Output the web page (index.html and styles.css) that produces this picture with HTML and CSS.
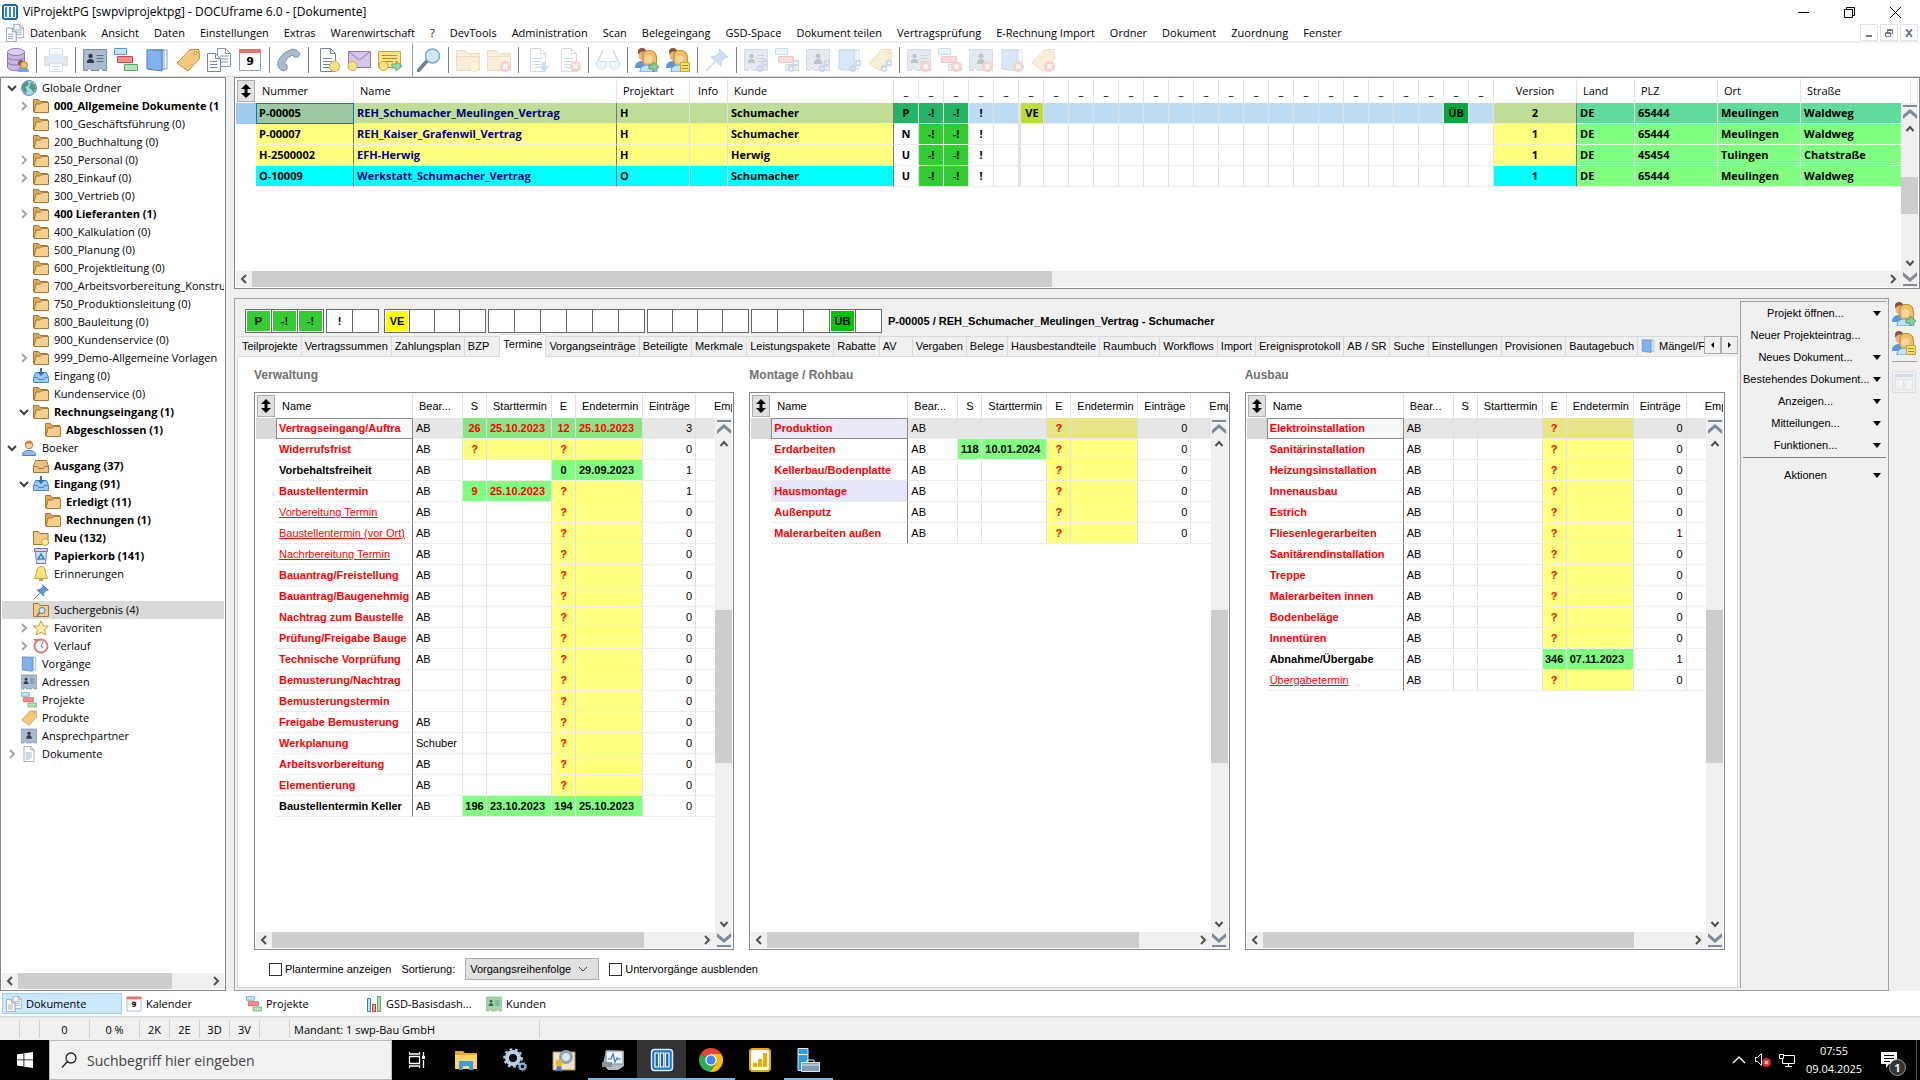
FILE: index.html
```html
<!DOCTYPE html>
<html lang="de">
<head>
<meta charset="utf-8">
<title>ViProjektPG [swpviprojektpg] - DOCUframe 6.0 - [Dokumente]</title>
<link rel="stylesheet" href="styles.css">
</head>
<body>
<svg class="sprite" aria-hidden="true">
  <symbol id="app" viewBox="0 0 16 16"><rect x=".5" y=".5" width="15" height="15" rx="2.500" fill="#1c6db5" stroke="#1c5f9e"/><path d="M2.500 2.500h3v11h-3zM6.500 2.500h3v11h-3zM10.500 2.500h3v11h-3z" fill="#2f86d0" stroke="#fff"/></symbol>
  <symbol id="book" viewBox="0 0 24 24"><path d="M17 2h5v19h-5z" fill="#fff" stroke="#7f9dbd"/><path d="M2 1.500l15 1V23L2 21z" fill="#7fb2ee" stroke="#4a7ec2"/><path d="M2 1.500h17v20" fill="none" stroke="#7f9dbd"/></symbol>
  <symbol id="card" viewBox="0 0 24 24"><path d="M.5 1.500h23v21h-4c-.5-3-3-3-3.500 0H8c-.5-3-3-3-3.500 0h-4z" fill="#a9bbce" stroke="#7b8fa6"/><circle cx="7.500" cy="8" r="2.200" fill="#2f3b49"/><path d="M4 15v-2l2-2h3l2 2v2z" fill="#2f3b49"/><path d="M13.500 7.500h7M13.500 10.500h7M13.500 13.500h7" stroke="#5b6d82"/></symbol>
  <symbol id="contact" viewBox="0 0 24 24"><path d="M.5 1.500h23v21h-4c-.5-3-3-3-3.500 0H8c-.5-3-3-3-3.500 0h-4z" fill="#a9bbce" stroke="#7b8fa6"/><circle cx="12" cy="8" r="2.500" fill="#2f3b49"/><path d="M8 16v-2l2-3h4l2 3v2z" fill="#2f3b49"/></symbol>
  <symbol id="cardg" viewBox="0 0 24 24"><path d="M.5 1.500h23v21h-4c-.5-3-3-3-3.500 0H8c-.5-3-3-3-3.500 0h-4z" fill="#a5d6a9" stroke="#7ab986"/><circle cx="7.500" cy="8" r="2.200" fill="#3d6b4b"/><path d="M4 15v-2l2-2h3l2 2v2z" fill="#3d6b4b"/><path d="M13.500 7.500h7M13.500 10.500h7M13.500 13.500h7" stroke="#4d8560"/></symbol>
  <symbol id="proj" viewBox="0 0 24 24"><path d="M.5.5h12v6H.5z" fill="#bfe3fa" stroke="#4f9bd6"/><path d="M3.500 8.500h15v6h-15z" fill="#f78c8c" stroke="#c94a4a"/><path d="M10.500 16.500h13v6h-13z" fill="#b3e2b8" stroke="#57a867"/></symbol>
  <symbol id="tag" viewBox="0 0 24 24"><path d="M14 1.500h9l.5 9L12 23 1 15z" fill="#f5c97c" stroke="#c08a3a" stroke-linejoin="round"/><circle cx="19.500" cy="5" r="1.500" fill="#fff" stroke="#c08a3a"/></symbol>
  <symbol id="docs" viewBox="0 0 24 24"><path d="M10.500.5h8l5 5v13h-13z" fill="#f6f8fb" stroke="#8797a8"/><path d="M18.500.5v5h5M13 8h8M13 11h8M13 14h8" fill="none" stroke="#8797a8"/><path d="M.5 5.500h8l5 5v13H.5z" fill="#fff" stroke="#71869c"/><path d="M8.500 5.500v5h5M3 13.500h7M3 16.500h7M3 19.500h7" fill="none" stroke="#71869c"/></symbol>
  <symbol id="doc" viewBox="0 0 24 24"><path d="M4.500.5h10l5 5v18h-15z" fill="#fff" stroke="#71869c"/><path d="M14.500.5v5h5M7 10.500h9M7 13.500h9M7 16.500h9M7 19.500h6" fill="none" stroke="#71869c"/></symbol>
  <symbol id="cal" viewBox="0 0 24 24"><path d="M1.500 1.500h21v21h-21z" fill="#fdfdfd" stroke="#87a5bd"/><path d="M1 1h22v4H1z" fill="#f26d6d"/><text x="12" y="17" text-anchor="middle" font-family="DejaVu Sans" font-weight="700" font-size="11">9</text></symbol>
  <symbol id="coin" viewBox="0 0 24 24"><circle cx="18.500" cy="18.500" r="5" fill="#ffe37f" stroke="#c6a33c"/></symbol>
  <symbol id="bad" viewBox="0 0 24 24"><circle cx="18.500" cy="18.500" r="5.500" fill="#ef6666"/><path d="M16.500 16.500l4 4m0-4l-4 4" stroke="#fff" stroke-width="2"/></symbol>
  <symbol id="link" viewBox="0 0 24 24"><g fill="none" stroke="#4f80bf" stroke-width="1.800"><circle cx="16" cy="20.500" r="2.500"/><circle cx="21" cy="15" r="2.500"/><path d="M17 19.500l3-3.500"/></g></symbol>
  <symbol id="db" viewBox="0 0 24 24"><path d="M2.500 4v15c0 5 17 5 17 0V4" fill="#c9b5e3" stroke="#9379b8"/><ellipse cx="11" cy="4" rx="8.500" ry="3.500" fill="#ddd0ef" stroke="#9379b8"/><path d="M2.500 9c0 4 17 4 17 0M2.500 14c0 4 17 4 17 0" fill="none" stroke="#9379b8"/><circle cx="16" cy="15" r="3" fill="#8a5a3c"/><path d="M13 24c0-4 1-5 3-5s8 0 8 5z" fill="#6fa8e8"/><circle cx="19" cy="17" r="3.500" fill="#f3c071" stroke="#b98430"/></symbol>
  <symbol id="print" viewBox="0 0 24 24"><path d="M5.500.5h13v8h-13z" fill="#fff" stroke="#8797a8"/><path d="M.5 8.500h23v9H.5z" fill="#aebccc" stroke="#8797a8"/><path d="M4 6h16v6H4z" fill="#8dc1f5"/><path d="M5.500 15.500h13v8h-13zM8 18.500h8M8 21h8" fill="#fff" stroke="#8797a8"/></symbol>
  <symbol id="phone" viewBox="0 0 24 24"><path d="M13 2c3-2 8 0 10 4l-2 3h-4l-1-2c-5 2-8 5-8 9l2 1v4l-3 2c-4-1-7-4-6-9C3 8 8 4 13 2z" fill="#a9bbce" stroke="#7b8fa6"/></symbol>
  <symbol id="mail" viewBox="0 0 24 24"><path d="M1.500 3.500h22v16h-22z" fill="#d6c6ea" stroke="#9379b8"/><path d="M2 4l10.500 8L23 4" fill="none" stroke="#9379b8"/><circle cx="5.500" cy="18" r="4.500" fill="#ffe37f" stroke="#c6a33c"/></symbol>
  <symbol id="note" viewBox="0 0 24 24"><path d="M.5 3.500h22v16H.5z" fill="#fbe287" stroke="#c6a33c"/><path d="M4 7.500h15M4 10.500h15M4 13.500h11" stroke="#b18c2c"/><circle cx="5.500" cy="18" r="4.500" fill="#ffe37f" stroke="#c6a33c"/><path d="M14 16h4v-3l6 5-6 5v-3h-4z" fill="#9fd6a6" stroke="#57a867"/></symbol>
  <symbol id="lens" viewBox="0 0 24 24"><path d="M10 13L1.500 22.500" stroke="#6f8296" stroke-width="3.500" stroke-linecap="round"/><circle cx="15.500" cy="8" r="7" fill="#cdeafd" stroke="#7ea6c8" stroke-width="1.500"/></symbol>
  <symbol id="fold" viewBox="0 0 24 24"><path d="M.5 22.500v-20h9l2 3h12v17z" fill="#f3c985" stroke="#c2924a"/><path d="M.5 8.500h23" stroke="#c2924a"/></symbol>
  <symbol id="down" viewBox="0 0 24 24"><path d="M16 14h4v4h3l-5 6-5-6h3z" fill="#5b96e0"/></symbol>
  <symbol id="glasses" viewBox="0 0 24 24"><path d="M2 13L7 2M22 13L17 2" fill="none" stroke="#5fae7f" stroke-width="1.500"/><path d="M.5 13.500h10v3c0 6-10 6-10 0zM13.500 13.500h10v3c0 6-10 6-10 0zM10 14h4" fill="#bfe3fa" stroke="#6aa5c9"/></symbol>
  <symbol id="people" viewBox="0 0 24 24"><path d="M0 20c0-5 3-7 7-7l5 7z" fill="#5b96e0"/><circle cx="7" cy="4" r="4" fill="#8a5238"/><circle cx="8" cy="8" r="4.500" fill="#e9b77c"/><path d="M8 6c1-5 12-5 13 1 1 5 1 9-1 13h-4L9 17c-2-3-1-8-1-11z" fill="#f0bf62" stroke="#b98430"/><circle cx="13.500" cy="11" r="4" fill="#fbd3a0"/><path d="M5 24c0-5 3-7 8-7s9 2 9 7z" fill="#bfe3fa" stroke="#5b96e0"/></symbol>
  <symbol id="go" viewBox="0 0 24 24"><path d="M14 17h4v-3l6 5-6 5v-3h-4z" fill="#8bd09a" stroke="#4f9f64"/></symbol>
  <symbol id="memo" viewBox="0 0 24 24"><path d="M14.500 14.500h9v9h-9z" fill="#fbdc62" stroke="#c6a33c"/><path d="M16 17.500h6M16 20.500h6" stroke="#b18c2c"/></symbol>
  <symbol id="pin" viewBox="0 0 24 24"><path d="M10 14L1 23" stroke="#6f8296" stroke-width="1.500"/><path d="M14 1l9 8-4 1-3 4v4L6 9l5-1 4-4z" fill="#5b96e0" stroke="#2f6fb5"/></symbol>
  <symbol id="win" viewBox="0 0 24 24"><path d="M.5 1.500h23v21H.5z" fill="#f3f6f9" stroke="#a9bbce"/><path d="M3 4h18v3H3z" fill="#8fb0d5"/><path d="M3.500 9.500h8v10h-8zM13.500 9.500h7v10h-7z" fill="#fff" stroke="#b7c3cf"/></symbol>
  <symbol id="folder" viewBox="0 0 16 16"><path d="M.5 13.500v-12h5l1.500 2h7.500v10z" fill="#dca85a" stroke="#a87733"/><path d="M1 14.500L3 6h4.500l1.500-1.500h6.500v10z" fill="#f6cf8d" stroke="#a87733"/></symbol>
  <symbol id="newf" viewBox="0 0 16 16"><path d="M.5 14.500v-13h5l1.500 2h8v11z" fill="#f3c985" stroke="#a87733"/><circle cx="12" cy="12" r="3.500" fill="#ffe99b" stroke="#c6a33c"/></symbol>
  <symbol id="searchf" viewBox="0 0 16 16"><path d="M.5 14.500v-13h5l1.500 2h8.500v11z" fill="#f3c985" stroke="#a87733"/><path d="M4 14l3-4" stroke="#55789b" stroke-width="1.500"/><circle cx="9" cy="8.500" r="3" fill="#cdeafd" stroke="#55789b"/></symbol>
  <symbol id="inbox" viewBox="0 0 16 16"><path d="M2.500 4.500h11l2 5v5H.5v-5z" fill="#9ccaf5" stroke="#4a86c8"/><path d="M.5 9.500h4l1 2h5l1-2h4" fill="none" stroke="#4a86c8"/><path d="M7 0h2v4h3L8 8 4 4h3z" fill="#2f6fb5"/></symbol>
  <symbol id="outbox" viewBox="0 0 16 16"><path d="M2.500 2.500h11l2 6v6H.5v-6z" fill="#ecc384" stroke="#a87733"/><path d="M.5 8.500h4l1 2h5l1-2h4" fill="none" stroke="#a87733"/></symbol>
  <symbol id="globe" viewBox="0 0 16 16"><circle cx="8" cy="8" r="7.500" fill="#a8d5f2" stroke="#5b8fb5"/><path d="M2 4l4-3 2 2-1 3-3 1 2 3-1 4-3-3-1-4zM10 2l4 3 1 4-3 4-1-3-3-2 1-3z" fill="#4e9c7c"/></symbol>
  <symbol id="user" viewBox="0 0 16 16"><path d="M1.500 15.500c0-4 3-5 6.500-5s6.500 1 6.500 5z" fill="#8fbdf0" stroke="#4a7ec2"/><circle cx="8" cy="5" r="3.700" fill="#fbd3a0" stroke="#b8793e"/><path d="M4 5c0-6 8-6 8 0-2-2-6-2-8 0z" fill="#c98345"/></symbol>
  <symbol id="trash" viewBox="0 0 16 16"><path d="M2.500 3.500h11l-1 12h-9z" fill="#cfe4f7" stroke="#8570b5"/><path d="M1.500.5h13v3h-13z" fill="#d8cbee" stroke="#8570b5"/><path d="M8 6l3 5H5z" fill="none" stroke="#3b82c4" stroke-width="1.500"/></symbol>
  <symbol id="bell" viewBox="0 0 16 16"><path d="M8 .5c4 0 4.500 4 4.500 7l2 5h-13l2-5c0-3 .5-7 4.500-7z" fill="#ffe37f" stroke="#c6a33c"/><path d="M6 13h4v2H6z" fill="#c6a33c"/></symbol>
  <symbol id="star" viewBox="0 0 16 16"><path d="M8 .8l2.200 5 5.300.4-4 3.500 1.200 5.300L8 12.200 3.300 15l1.200-5.300-4-3.500 5.300-.4z" fill="#fff0a8" stroke="#c6a33c"/></symbol>
  <symbol id="hist" viewBox="0 0 16 16"><circle cx="8" cy="8" r="6.500" fill="#f1f6fb" stroke="#e07a7a" stroke-width="2"/><path d="M10 4L8 8.500l2.500 1.500" fill="none" stroke="#6f8296"/><path d="M0 1l5 0-1 4z" fill="#e07a7a"/></symbol>
  <symbol id="bars" viewBox="0 0 16 16"><path d="M1.500 2.500h3v13h-3z" fill="#bfe3fa" stroke="#3b78b8"/><path d="M6.500 8.500h3v7h-3z" fill="#f7a0a0" stroke="#c33"/><path d="M11.500.5h3v15h-3z" fill="#b3e2b8" stroke="#57a867"/></symbol>
  <symbol id="cr" viewBox="0 0 10 10"><path d="M3 1l4 4-4 4" fill="none" stroke="#a6a6a6" stroke-width="2"/></symbol>
  <symbol id="cd" viewBox="0 0 10 10"><path d="M1 3l4 4 4-4" fill="none" stroke="#404040" stroke-width="2"/></symbol>
  <symbol id="sl" viewBox="0 0 10 10"><path d="M7 1L3 5l4 4" fill="none" stroke="#505050" stroke-width="2"/></symbol>
  <symbol id="sr" viewBox="0 0 10 10"><path d="M3 1l4 4-4 4" fill="none" stroke="#505050" stroke-width="2"/></symbol>
  <symbol id="su" viewBox="0 0 10 10"><path d="M1.500 7L5 3l3.500 4" fill="none" stroke="#505050" stroke-width="2"/></symbol>
  <symbol id="sd" viewBox="0 0 10 10"><path d="M1.500 3L5 7l3.500-4" fill="none" stroke="#505050" stroke-width="2"/></symbol>
  <symbol id="first" viewBox="0 0 14 14"><path d="M0 0h14v2H0zM7 4l7 6v4L7 8l-7 6v-4z" fill="#7c8a9c"/></symbol>
  <symbol id="last" viewBox="0 0 14 14"><path d="M0 12h14v2H0zM7 10l7-6V0L7 6 0 0v4z" fill="#7c8a9c"/></symbol>
  <symbol id="ud" viewBox="0 0 10 14"><path d="M5 0l5 5H6.500v4H10l-5 5-5-5h3.500V5H0z" fill="#000"/></symbol>
  <symbol id="tri" viewBox="0 0 8 5"><path d="M0 0h8L4 5z" fill="#000"/></symbol>
</svg>

<header class="titlebar"><svg class="s16"><use href="#app"/></svg><h1>ViProjektPG [swpviprojektpg] - DOCUframe 6.0 - [Dokumente]</h1>
  <div class="winbtns">
    <button aria-label="Minimieren"><svg viewBox="0 0 11 11"><path d="M0 5.500h11" stroke="#000"/></svg></button>
    <button aria-label="Verkleinern"><svg viewBox="0 0 11 11"><path d="M.5 2.500h8v8h-8zM2.500 2V.5h8v8H9" fill="none" stroke="#000"/></svg></button>
    <button aria-label="Schließen"><svg viewBox="0 0 11 11"><path d="M0 0l11 11M11 0L0 11" stroke="#000"/></svg></button>
  </div>
</header>
<nav class="menubar"><svg class="s18"><use href="#docs"/></svg>
  <button>Datenbank</button><button>Ansicht</button><button>Daten</button><button>Einstellungen</button><button>Extras</button><button>Warenwirtschaft</button><button>?</button><button>DevTools</button><button>Administration</button><button>Scan</button><button>Belegeingang</button><button>GSD-Space</button><button>Dokument teilen</button><button>Vertragsprüfung</button><button>E-Rechnung Import</button><button>Ordner</button><button>Dokument</button><button>Zuordnung</button><button>Fenster</button>
  <div class="mdi">
    <button aria-label="Fenster minimieren"><svg viewBox="0 0 8 8"><path d="M1 7h6" stroke="#6d7b8c" stroke-width="2"/></svg></button>
    <button aria-label="Fenster verkleinern"><svg viewBox="0 0 8 8"><path d="M.5 3.500h5v4h-5zM.5 4.500h5M2.500 3V.5h5v4H6M2 1.500h6" fill="none" stroke="#6d7b8c"/></svg></button>
    <button aria-label="Fenster schließen"><svg viewBox="0 0 8 8"><path d="M1 0l6 8M7 0L1 8" stroke="#6d7b8c" stroke-width="2"/></svg></button>
  </div>
</nav>
<div class="toolbar">
  <button aria-label="Datenbank"><svg><use href="#db"/></svg></button><i></i>
  <button aria-label="Drucken" disabled><svg><use href="#print"/></svg></button><i></i>
  <button aria-label="Adressen"><svg><use href="#card"/></svg></button>
  <button aria-label="Projekte"><svg><use href="#proj"/></svg></button>
  <button aria-label="Vorgänge"><svg><use href="#book"/></svg></button>
  <button aria-label="Produkte"><svg><use href="#tag"/></svg></button>
  <button aria-label="Dokumente"><svg><use href="#docs"/></svg></button>
  <button aria-label="Kalender"><svg><use href="#cal"/></svg></button><i></i>
  <button aria-label="Telefon"><svg><use href="#phone"/></svg></button><i></i>
  <button aria-label="Neues Dokument"><svg><use href="#doc"/><use href="#coin"/></svg></button>
  <button aria-label="Neue E-Mail"><svg><use href="#mail"/></svg></button>
  <button aria-label="Neue Mitteilung"><svg><use href="#note"/></svg></button><i class="tall"></i>
  <button aria-label="Suchen"><svg><use href="#lens"/></svg></button><i></i>
  <button aria-label="Neuer Ordner" disabled><svg><use href="#fold"/><use href="#coin"/></svg></button>
  <button aria-label="Ordner löschen" disabled><svg><use href="#fold"/><use href="#bad"/></svg></button><i></i>
  <button aria-label="Ablegen" disabled><svg><use href="#doc"/><use href="#down"/></svg></button>
  <button aria-label="Löschen" disabled><svg><use href="#doc"/><use href="#bad"/></svg></button><i></i>
  <button aria-label="Ansehen" disabled><svg><use href="#glasses"/></svg></button><i></i>
  <button aria-label="Weiterleiten"><svg><use href="#people"/><use href="#go"/></svg></button>
  <button aria-label="Notiz senden"><svg><use href="#people"/><use href="#memo"/></svg></button><i></i>
  <button aria-label="Anheften" disabled><svg><use href="#pin"/></svg></button><i></i>
  <button aria-label="Adresse zuordnen" disabled><svg><use href="#card"/><use href="#link"/></svg></button>
  <button aria-label="Projekt zuordnen" disabled><svg><use href="#proj"/><use href="#link"/></svg></button>
  <button aria-label="Ansprechpartner zuordnen" disabled><svg><use href="#contact"/><use href="#link"/></svg></button>
  <button aria-label="Vorgang zuordnen" disabled><svg><use href="#book"/><use href="#link"/></svg></button>
  <button aria-label="Produkt zuordnen" disabled><svg><use href="#tag"/><use href="#link"/></svg></button><i></i>
  <button aria-label="Adresse lösen" disabled><svg><use href="#card"/><use href="#bad"/></svg></button>
  <button aria-label="Projekt lösen" disabled><svg><use href="#proj"/><use href="#bad"/></svg></button>
  <button aria-label="Ansprechpartner lösen" disabled><svg><use href="#contact"/><use href="#bad"/></svg></button>
  <button aria-label="Vorgang lösen" disabled><svg><use href="#book"/><use href="#bad"/></svg></button>
  <button aria-label="Produkt lösen" disabled><svg><use href="#tag"/><use href="#bad"/></svg></button>
</div>

<main class="work">
  <aside class="treepane">
    <ul class="tree">
      <li><b><svg><use href="#cd"/></svg></b><svg><use href="#globe"/></svg><span>Globale Ordner</span>
      <li class="l1 bold"><b><svg><use href="#cr"/></svg></b><svg><use href="#folder"/></svg><span>000_Allgemeine Dokumente (1</span>
      <li class="l1"><b></b><svg><use href="#folder"/></svg><span>100_Geschäftsführung (0)</span>
      <li class="l1"><b></b><svg><use href="#folder"/></svg><span>200_Buchhaltung (0)</span>
      <li class="l1"><b><svg><use href="#cr"/></svg></b><svg><use href="#folder"/></svg><span>250_Personal (0)</span>
      <li class="l1"><b><svg><use href="#cr"/></svg></b><svg><use href="#folder"/></svg><span>280_Einkauf (0)</span>
      <li class="l1"><b></b><svg><use href="#folder"/></svg><span>300_Vertrieb (0)</span>
      <li class="l1 bold"><b><svg><use href="#cr"/></svg></b><svg><use href="#folder"/></svg><span>400 Lieferanten (1)</span>
      <li class="l1"><b></b><svg><use href="#folder"/></svg><span>400_Kalkulation (0)</span>
      <li class="l1"><b></b><svg><use href="#folder"/></svg><span>500_Planung (0)</span>
      <li class="l1"><b></b><svg><use href="#folder"/></svg><span>600_Projektleitung (0)</span>
      <li class="l1"><b></b><svg><use href="#folder"/></svg><span>700_Arbeitsvorbereitung_Konstru</span>
      <li class="l1"><b></b><svg><use href="#folder"/></svg><span>750_Produktionsleitung (0)</span>
      <li class="l1"><b></b><svg><use href="#folder"/></svg><span>800_Bauleitung (0)</span>
      <li class="l1"><b></b><svg><use href="#folder"/></svg><span>900_Kundenservice (0)</span>
      <li class="l1"><b><svg><use href="#cr"/></svg></b><svg><use href="#folder"/></svg><span>999_Demo-Allgemeine Vorlagen</span>
      <li class="l1"><b></b><svg><use href="#inbox"/></svg><span>Eingang (0)</span>
      <li class="l1"><b></b><svg><use href="#folder"/></svg><span>Kundenservice (0)</span>
      <li class="l1 bold"><b><svg><use href="#cd"/></svg></b><svg><use href="#folder"/></svg><span>Rechnungseingang (1)</span>
      <li class="l2 bold"><b></b><svg><use href="#folder"/></svg><span>Abgeschlossen (1)</span>
      <li><b><svg><use href="#cd"/></svg></b><svg><use href="#user"/></svg><span>Boeker</span>
      <li class="l1 bold"><b></b><svg><use href="#outbox"/></svg><span>Ausgang (37)</span>
      <li class="l1 bold"><b><svg><use href="#cd"/></svg></b><svg><use href="#inbox"/></svg><span>Eingang (91)</span>
      <li class="l2 bold"><b></b><svg><use href="#folder"/></svg><span>Erledigt (11)</span>
      <li class="l2 bold"><b></b><svg><use href="#folder"/></svg><span>Rechnungen (1)</span>
      <li class="l1 bold"><b></b><svg><use href="#newf"/></svg><span>Neu (132)</span>
      <li class="l1 bold"><b></b><svg><use href="#trash"/></svg><span>Papierkorb (141)</span>
      <li class="l1"><b></b><svg><use href="#bell"/></svg><span>Erinnerungen</span>
      <li class="l1"><b></b><svg><use href="#pin"/></svg>
      <li class="l1 sel"><b></b><svg><use href="#searchf"/></svg><span>Suchergebnis (4)</span>
      <li class="l1"><b><svg><use href="#cr"/></svg></b><svg><use href="#star"/></svg><span>Favoriten</span>
      <li class="l1"><b><svg><use href="#cr"/></svg></b><svg><use href="#hist"/></svg><span>Verlauf</span>
      <li><b></b><svg><use href="#book"/></svg><span>Vorgänge</span>
      <li><b></b><svg><use href="#card"/></svg><span>Adressen</span>
      <li><b></b><svg><use href="#proj"/></svg><span>Projekte</span>
      <li><b></b><svg><use href="#tag"/></svg><span>Produkte</span>
      <li><b></b><svg><use href="#contact"/></svg><span>Ansprechpartner</span>
      <li><b><svg><use href="#cr"/></svg></b><svg><use href="#doc"/></svg><span>Dokumente</span>
    </ul>
    <div class="hs"><svg><use href="#sl"/></svg><div class="track"><div class="thumb" style="width:81%"></div></div><svg><use href="#sr"/></svg></div>
  </aside>

  <div class="right">
    <section class="grid top">
      <table class="list">
        <colgroup><col class="c-h"><col class="c-nr"><col class="c-nm"><col class="c-pa"><col class="c-in"><col class="c-ku"><col span="24" class="c-s"><col class="c-83"><col class="c-58"><col span="2" class="c-83"><col class="c-str"><col></colgroup>
        <thead><tr><th><button class="handle" aria-label="Sortieren"><svg><use href="#ud"/></svg></button><th>Nummer<th>Name<th>Projektart<th>Info<th>Kunde<th>_<th>_<th>_<th>_<th>_<th>_<th>_<th>_<th>_<th>_<th>_<th>_<th>_<th>_<th>_<th>_<th>_<th>_<th>_<th>_<th>_<th>_<th>_<th>_<th>Version<th>Land<th>PLZ<th>Ort<th>Straße<th></thead>
        <tbody>
          <tr class="cur"><td><td>P-00005<td>REH_Schumacher_Meulingen_Vertrag<td>H<td><td>Schumacher<td class="g">P<td class="g">-!<td class="g">-!<td>!<td><td class="ve">VE<td><td><td><td><td><td><td><td><td><td><td><td><td><td><td><td><td class="ub">ÜB<td><td>2<td>DE<td>65444<td>Meulingen<td>Waldweg<td>
          <tr class="yel"><td><td>P-00007<td>REH_Kaiser_Grafenwil_Vertrag<td>H<td><td>Schumacher<td>N<td class="g">-!<td class="g">-!<td>!<td><td><td><td><td><td><td><td><td><td><td><td><td><td><td><td><td><td><td><td><td>1<td>DE<td>65444<td>Meulingen<td>Waldweg<td>
          <tr class="yel"><td><td>H-2500002<td>EFH-Herwig<td>H<td><td>Herwig<td>U<td class="g">-!<td class="g">-!<td>!<td><td><td><td><td><td><td><td><td><td><td><td><td><td><td><td><td><td><td><td><td>1<td>DE<td>45454<td>Tulingen<td>Chatstraße<td>
          <tr class="cya"><td><td>O-10009<td>Werkstatt_Schumacher_Vertrag<td>O<td><td>Schumacher<td>U<td class="g">-!<td class="g">-!<td>!<td><td><td><td><td><td><td><td><td><td><td><td><td><td><td><td><td><td><td><td><td>1<td>DE<td>65444<td>Meulingen<td>Waldweg<td>
        </tbody>
      </table>
      <div class="vs"><svg class="s14"><use href="#first"/></svg><svg><use href="#su"/></svg><div class="vtrack"><div class="vthumb" style="height:31%;top:34%"></div></div><svg><use href="#sd"/></svg></div>
      <div class="hs"><svg><use href="#sl"/></svg><div class="track"><div class="thumb" style="width:49%"></div></div><svg><use href="#sr"/></svg></div>
      <div class="corner"><svg class="s14"><use href="#last"/></svg></div>
    </section>

    <div class="lower">
      <section class="project">
        <div class="detail">
          <div class="phase">
            <div class="grp"><span class="on">P</span><span class="on">-!</span><span class="on">-!</span></div>
            <div class="grp"><span>!</span><span></span></div>
            <div class="grp four wide"><span class="y">VE</span><span></span><span></span><span></span></div>
            <div class="grp"><span></span><span></span><span></span><span></span><span></span><span></span></div>
            <div class="grp four"><span></span><span></span><span></span><span></span></div>
            <div class="grp"><span></span><span></span><span></span><span class="on u">ÜB</span><span></span></div>
            <h2>P-00005 / REH_Schumacher_Meulingen_Vertrag - Schumacher</h2>
          </div>
          <div class="tabs">
            <div class="tabstrip"><button>Teilprojekte</button><button>Vertragssummen</button><button>Zahlungsplan</button><button class="pad">BZP</button><button class="act">Termine</button><button>Vorgangseinträge</button><button>Beteiligte</button><button>Merkmale</button><button>Leistungspakete</button><button>Rabatte</button><button class="pad more">AV</button><button>Vergaben</button><button>Belege</button><button>Hausbestandteile</button><button>Raumbuch</button><button>Workflows</button><button>Import</button><button>Ereignisprotokoll</button><button>AB / SR</button><button>Suche</button><button>Einstellungen</button><button>Provisionen</button><button>Bautagebuch</button><button class="ic"><svg class="s14"><use href="#book"/></svg>Mängel/F</button></div>
            <button class="sp" aria-label="Zurück"><svg viewBox="0 0 5 8"><path d="M4 1v6L1 4z"/></svg></button><button class="sp" aria-label="Weiter"><svg viewBox="0 0 5 8"><path d="M1 1v6l3-3z"/></svg></button>
          </div>
          <div class="page">
            <div class="three">
              <section><h3>Verwaltung</h3>
                <div class="grid">
                  <table class="dates">
                    <colgroup><col class="c-h"><col class="d-n"><col class="d-b"><col class="d-s"><col class="d-d"><col class="d-s"><col class="d-e"><col class="d-i"><col></colgroup>
                    <thead><tr><th><button class="handle" aria-label="Sortieren"><svg><use href="#ud"/></svg></button><th>Name<th>Bear...<th>S<th>Starttermin<th>E<th>Endetermin<th>Einträge<th class="cut">Emp</thead>
                    <tbody>
                      <tr class="first"><td><td>Vertragseingang/Auftra<td>AB<td class="g">26<td class="g">25.10.2023<td class="g">12<td class="g">25.10.2023<td>3<td>
                      <tr><td><td>Widerrufsfrist<td>AB<td class="y">?<td class="y"><td class="y">?<td class="y"><td>0<td>
                      <tr class="blk"><td><td>Vorbehaltsfreiheit<td>AB<td><td><td class="g">0<td class="g">29.09.2023<td>1<td>
                      <tr><td><td>Baustellentermin<td>AB<td class="g">9<td class="g">25.10.2023<td class="y">?<td class="y"><td>1<td>
                      <tr><td><td><a href="#">Vorbereitung Termin</a><td>AB<td><td><td class="y">?<td class="y"><td>0<td>
                      <tr><td><td><a href="#">Baustellentermin (vor Ort)</a><td>AB<td><td><td class="y">?<td class="y"><td>0<td>
                      <tr><td><td><a href="#">Nachrbereitung Termin</a><td>AB<td><td><td class="y">?<td class="y"><td>0<td>
                      <tr><td><td>Bauantrag/Freistellung<td>AB<td><td><td class="y">?<td class="y"><td>0<td>
                      <tr><td><td>Bauantrag/Baugenehmig<td>AB<td><td><td class="y">?<td class="y"><td>0<td>
                      <tr><td><td>Nachtrag zum Baustelle<td>AB<td><td><td class="y">?<td class="y"><td>0<td>
                      <tr><td><td>Prüfung/Freigabe Bauge<td>AB<td><td><td class="y">?<td class="y"><td>0<td>
                      <tr><td><td>Technische Vorprüfung<td>AB<td><td><td class="y">?<td class="y"><td>0<td>
                      <tr><td><td>Bemusterung/Nachtrag<td><td><td><td class="y">?<td class="y"><td>0<td>
                      <tr><td><td>Bemusterungstermin<td><td><td><td class="y">?<td class="y"><td>0<td>
                      <tr><td><td>Freigabe Bemusterung<td>AB<td><td><td class="y">?<td class="y"><td>0<td>
                      <tr><td><td>Werkplanung<td>Schuber<td><td><td class="y">?<td class="y"><td>0<td>
                      <tr><td><td>Arbeitsvorbereitung<td>AB<td><td><td class="y">?<td class="y"><td>0<td>
                      <tr><td><td>Elementierung<td>AB<td><td><td class="y">?<td class="y"><td>0<td>
                      <tr class="blk"><td><td>Baustellentermin Keller<td>AB<td class="g">196<td class="g">23.10.2023<td class="g">194<td class="g">25.10.2023<td>0<td>
                    </tbody>
                  </table>
                  <div class="vs"><svg class="s14"><use href="#first"/></svg><svg><use href="#su"/></svg><div class="vtrack"><div class="vthumb" style="height:33%;top:34%"></div></div><svg><use href="#sd"/></svg></div>
                  <div class="hs"><svg><use href="#sl"/></svg><div class="track"><div class="thumb" style="width:87%"></div></div><svg><use href="#sr"/></svg></div>
                  <div class="corner"><svg class="s14"><use href="#last"/></svg></div>
                </div>
              </section>
              <section><h3>Montage / Rohbau</h3>
                <div class="grid">
                  <table class="dates">
                    <colgroup><col class="c-h"><col class="d-n"><col class="d-b"><col class="d-s"><col class="d-d"><col class="d-s"><col class="d-e"><col class="d-i"><col></colgroup>
                    <thead><tr><th><button class="handle" aria-label="Sortieren"><svg><use href="#ud"/></svg></button><th>Name<th>Bear...<th>S<th>Starttermin<th>E<th>Endetermin<th>Einträge<th class="cut">Emp</thead>
                    <tbody>
                      <tr class="first"><td><td class="lav">Produktion<td>AB<td><td><td class="y">?<td class="y"><td>0<td>
                      <tr><td><td>Erdarbeiten<td>AB<td class="g k">118<td class="g k">10.01.2024<td class="y">?<td class="y"><td>0<td>
                      <tr><td><td>Kellerbau/Bodenplatte<td>AB<td><td><td class="y">?<td class="y"><td>0<td>
                      <tr><td><td class="lav">Hausmontage<td>AB<td><td><td class="y">?<td class="y"><td>0<td>
                      <tr><td><td>Außenputz<td>AB<td><td><td class="y">?<td class="y"><td>0<td>
                      <tr><td><td>Malerarbeiten außen<td>AB<td><td><td class="y">?<td class="y"><td>0<td>
                    </tbody>
                  </table>
                  <div class="vs"><svg class="s14"><use href="#first"/></svg><svg><use href="#su"/></svg><div class="vtrack"><div class="vthumb" style="height:33%;top:34%"></div></div><svg><use href="#sd"/></svg></div>
                  <div class="hs"><svg><use href="#sl"/></svg><div class="track"><div class="thumb" style="width:87%"></div></div><svg><use href="#sr"/></svg></div>
                  <div class="corner"><svg class="s14"><use href="#last"/></svg></div>
                </div>
              </section>
              <section><h3>Ausbau</h3>
                <div class="grid">
                  <table class="dates">
                    <colgroup><col class="c-h"><col class="d-n"><col class="d-b"><col class="d-s"><col class="d-d"><col class="d-s"><col class="d-e"><col class="d-i"><col></colgroup>
                    <thead><tr><th><button class="handle" aria-label="Sortieren"><svg><use href="#ud"/></svg></button><th>Name<th>Bear...<th>S<th>Starttermin<th>E<th>Endetermin<th>Einträge<th class="cut">Emp</thead>
                    <tbody>
                      <tr class="first"><td><td>Elektroinstallation<td>AB<td><td><td class="y">?<td class="y"><td>0<td>
                      <tr><td><td>Sanitärinstallation<td>AB<td><td><td class="y">?<td class="y"><td>0<td>
                      <tr><td><td>Heizungsinstallation<td>AB<td><td><td class="y">?<td class="y"><td>0<td>
                      <tr><td><td>Innenausbau<td>AB<td><td><td class="y">?<td class="y"><td>0<td>
                      <tr><td><td>Estrich<td>AB<td><td><td class="y">?<td class="y"><td>0<td>
                      <tr><td><td>Fliesenlegerarbeiten<td>AB<td><td><td class="y">?<td class="y"><td>1<td>
                      <tr><td><td>Sanitärendinstallation<td>AB<td><td><td class="y">?<td class="y"><td>0<td>
                      <tr><td><td>Treppe<td>AB<td><td><td class="y">?<td class="y"><td>0<td>
                      <tr><td><td>Malerarbeiten innen<td>AB<td><td><td class="y">?<td class="y"><td>0<td>
                      <tr><td><td>Bodenbeläge<td>AB<td><td><td class="y">?<td class="y"><td>0<td>
                      <tr><td><td>Innentüren<td>AB<td><td><td class="y">?<td class="y"><td>0<td>
                      <tr class="blk"><td><td>Abnahme/Übergabe<td>AB<td><td><td class="g">346<td class="g">07.11.2023<td>1<td>
                      <tr><td><td><a href="#">Übergabetermin</a><td>AB<td><td><td class="y">?<td class="y"><td>0<td>
                    </tbody>
                  </table>
                  <div class="vs"><svg class="s14"><use href="#first"/></svg><svg><use href="#su"/></svg><div class="vtrack"><div class="vthumb" style="height:33%;top:34%"></div></div><svg><use href="#sd"/></svg></div>
                  <div class="hs"><svg><use href="#sl"/></svg><div class="track"><div class="thumb" style="width:87%"></div></div><svg><use href="#sr"/></svg></div>
                  <div class="corner"><svg class="s14"><use href="#last"/></svg></div>
                </div>
              </section>
            </div>
            <div class="opts">
              <label><input type="checkbox">Plantermine anzeigen</label>
              <label class="sort">Sortierung:<span class="combo"><select><option>Vorgangsreihenfolge</option></select><svg viewBox="0 0 10 10"><path d="M1 3l4 4 4-4" fill="none" stroke="#404040"/></svg></span></label>
              <label><input type="checkbox">Untervorgänge ausblenden</label>
            </div>
          </div>
        </div>
        <aside class="actions">
          <button><span>Projekt öffnen...</span><svg><use href="#tri"/></svg></button>
          <button><span>Neuer Projekteintrag...</span></button>
          <button><span>Neues Dokument...</span><svg><use href="#tri"/></svg></button>
          <button><span>Bestehendes Dokument...</span><svg><use href="#tri"/></svg></button>
          <button><span>Anzeigen...</span><svg><use href="#tri"/></svg></button>
          <button><span>Mitteilungen...</span><svg><use href="#tri"/></svg></button>
          <button><span>Funktionen...</span><svg><use href="#tri"/></svg></button>
          <hr>
          <button><span>Aktionen</span><svg><use href="#tri"/></svg></button>
        </aside>
      </section>
      <aside class="side">
        <button aria-label="Weiterleiten"><svg><use href="#people"/><use href="#go"/></svg></button>
        <button aria-label="Notiz senden"><svg><use href="#people"/><use href="#memo"/></svg></button>
        <hr>
        <button aria-label="Layout" disabled><svg><use href="#win"/></svg></button>
      </aside>
    </div>
  </div>
</main>

<nav class="views">
  <button class="act"><svg><use href="#docs"/></svg>Dokumente</button>
  <button><svg><use href="#cal"/></svg>Kalender</button>
  <button><svg><use href="#proj"/></svg>Projekte</button>
  <button><svg><use href="#bars"/></svg>GSD-Basisdash...</button>
  <button><svg><use href="#cardg"/></svg>Kunden</button>
</nav>
<footer class="status"><span class="w20"></span><span class="w20"></span><span class="w50">0</span><span class="w50">0 %</span><span class="w30">2K</span><span class="w30">2E</span><span class="w30">3D</span><span class="w30">3V</span><span class="w30"></span><span class="client">Mandant: 1 swp-Bau GmbH</span></footer>

<div class="taskbar">
  <button class="start" aria-label="Start"><svg viewBox="0 0 16 16"><path d="M0 2.300l6.500-.9v6.100H0zM7.300 1.300L16 0v7.500H7.300zM0 8.300h6.500v6.200L0 13.600zM7.300 8.300H16V16l-8.700-1.300z" fill="#fff"/></svg></button>
  <label class="find"><svg viewBox="0 0 16 16"><path d="M6.500 9.500L1 15.500" stroke="#222" stroke-width="1.300"/><circle cx="10" cy="6" r="5" fill="none" stroke="#222" stroke-width="1.300"/></svg><input type="text" placeholder="Suchbegriff hier eingeben" aria-label="Suchbegriff"></label>
  <button aria-label="Aufgabenansicht"><svg viewBox="0 0 24 24"><path d="M4.500 8.500h10v7h-10zM4.500 4v2h10V4M4.500 20v-2h10v2M18.500 4v4M18.500 12v8" fill="none" stroke="#fff" stroke-width="1.300"/><path d="M17 8h3v3h-3z" fill="#fff"/></svg></button>
  <button aria-label="Explorer"><svg viewBox="0 0 24 24"><path d="M1 3h8l2 2h12v16H1z" fill="#e5a93a"/><path d="M1 7h22v14H1z" fill="#fcd462"/><path d="M5 13h14v9h-4v-4H9v4H5z" fill="#3d9be0"/></svg></button>
  <button aria-label="Dienste"><svg viewBox="0 0 24 24"><circle cx="10" cy="10" r="6" fill="none" stroke="#b9d3e6" stroke-width="4"/><circle cx="10" cy="10" r="8.800" fill="none" stroke="#b9d3e6" stroke-width="2" stroke-dasharray="2.700 2.700"/><circle cx="19.500" cy="18.500" r="2.800" fill="none" stroke="#8fb4d0" stroke-width="2"/><circle cx="19.500" cy="18.500" r="4.300" fill="none" stroke="#8fb4d0" stroke-width="1" stroke-dasharray="1.500 1.500"/></svg></button>
  <button aria-label="Zertifikate"><svg viewBox="0 0 24 24"><path d="M1 4h22v18H1z" fill="#f2e3c4" stroke="#b08d57"/><circle cx="14" cy="9" r="5.500" fill="#dce6ee" stroke="#8aa3b8" stroke-width="3"/><path d="M5 17l-1 7 3-2 3 2-1-7z" fill="#3b82d6"/><circle cx="7" cy="15" r="3.500" fill="#f2b32c"/></svg></button>
  <button class="run" aria-label="Systemmonitor"><svg viewBox="0 0 24 24"><path d="M5 2l18 1v15l-6 4H7l-5-6z" fill="#b5bcc2"/><path d="M5 3h17v13H5z" fill="#eaf3fa" stroke="#7c8790"/><path d="M7 11h3l2-5 2 8 2-4 1 1h3" fill="none" stroke="#2f7fc0" stroke-width="1.200"/><path d="M1 14h10v5H1z" fill="#8d959c"/></svg></button>
  <button class="run on" aria-label="DOCUframe"><svg viewBox="0 0 24 24"><rect x="1.500" y="1.500" width="21" height="21" rx="3" fill="#1c78c8" stroke="#d8ecfb" stroke-width="1.500"/><path d="M5 5h3.500v14H5zM10.300 5h3.500v14h-3.500zM15.500 5H19v14h-3.500z" fill="#1565ad" stroke="#fff" stroke-width="1.200"/></svg></button>
  <button class="run" aria-label="Chrome"><svg viewBox="0 0 24 24"><path d="M12 12L1.600 6a12 12 0 0 1 20.800 0z" fill="#ea4335"/><path d="M12 12L1.600 6A12 12 0 0 0 11 24l6-9z" fill="#34a853"/><path d="M12 6h10.400A12 12 0 0 1 11 24l6-9z" fill="#fbbc05"/><circle cx="12" cy="12" r="5.700" fill="#fff"/><circle cx="12" cy="12" r="4.500" fill="#4285f4"/></svg></button>
  <button aria-label="Power BI"><svg viewBox="0 0 24 24"><rect x="2" y="1" width="20" height="22" rx="3" fill="#fff" stroke="#e8a90c" stroke-width="2"/><path d="M5 15h4v4H5zM10 11h4v8h-4zM15 5h4v14h-4z" fill="#e8ac00"/></svg></button>
  <button class="run" aria-label="Server-Manager"><svg viewBox="0 0 24 24"><path d="M1 .5h10v22H1z" fill="#2b9be3" stroke="#d8ecfb"/><path d="M1 6.500h10" stroke="#fff"/><path d="M4.500 14.500h18v9h-18z" fill="#7f9cb3" stroke="#dfe8ef"/><path d="M10 14v-2h7v2M5 17h17" fill="none" stroke="#dfe8ef"/></svg></button>
  <div class="tray">
    <svg viewBox="0 0 16 16"><path d="M2 11l6-6 6 6" fill="none" stroke="#fff" stroke-width="1.300"/></svg>
    <svg viewBox="0 0 16 16"><path d="M.5 5.500h2l4-4v12l-4-4h-2z" fill="none" stroke="#fff"/><circle cx="11.500" cy="10.500" r="4.500" fill="#e0242e"/><path d="M9.800 8.800l3.400 3.400m0-3.400l-3.400 3.400" stroke="#fff" stroke-width="1.200"/></svg>
    <svg viewBox="0 0 16 16"><path d="M5 3.500h10.500v8H3.500V7M9.500 12v2.500M6 14.500h7M.5 2.500h4v4h-4z" fill="none" stroke="#fff"/></svg>
    <div class="clock"><span>07:55</span><span>09.04.2025</span></div>
    <div class="msg"><svg viewBox="0 0 16 16"><path d="M0 0h16v12H8l-3 4v-4H0z" fill="#fff"/><path d="M3 3.500h10M3 6.500h10M3 9.500h6" stroke="#000"/></svg><b>1</b></div>
  </div>
</div>
</body>
</html>
```
FILE: styles.css
```css
* { box-sizing: border-box; }
html, body { height: 100%; margin: 0; }
body {
  display: flex; flex-direction: column; background: #f0f0f0; color: #000; overflow: hidden;
  font: 11px/16px "Open Sans", "Noto Sans", sans-serif;
}
button, input, select { font: inherit; color: inherit; border: 0; background: none; padding: 0; margin: 0; }
h1, h2, h3, ul { margin: 0; padding: 0; font-size: inherit; }
svg { display: block; flex: none; }
.sprite { display: none; }
.s14 { width: 14px; height: 14px; }
.s16 { width: 16px; height: 16px; }
.s18 { width: 18px; height: 18px; }

/* title, menu, toolbar */
.titlebar { display: flex; align-items: center; gap: 5px; height: 24px; padding-left: 2px; background: #fff; flex: none; }
.titlebar h1 { font-weight: 400; font-size: 12px; }
.winbtns { display: flex; margin-left: auto; padding-right: 2px; }
.winbtns button { width: 46px; height: 22px; display: grid; place-items: center; }
.winbtns svg { width: 11px; height: 11px; }
.menubar { display: flex; align-items: center; gap: 15px; height: 19px; padding: 0 2px 0 6px; background: #fff; border-bottom: 2px solid #f0f0f0; flex: none; white-space: nowrap; }
.menubar > svg + button { margin-left: -9px; }
.mdi { display: flex; gap: 2px; margin-left: auto; }
.mdi button { width: 18px; height: 17px; border: 1px solid #e3e3e3; display: grid; place-items: center; }
.mdi svg { width: 8px; height: 8px; }
.toolbar { display: flex; align-items: center; height: 34px; padding-left: 5px; background: #fff; border-bottom: 1px solid #dcdcdc; flex: none; }
.toolbar button { width: 31px; height: 24px; }
.toolbar svg, .side svg { width: 24px; height: 24px; }
.toolbar button:disabled svg, .side button:disabled svg { opacity: .3; }
.toolbar i { width: 8px; height: 26px; border-left: 1px solid #808080; }
.toolbar i.tall { height: 34px; border-left: 0; background: linear-gradient(#a0a0a0, #a0a0a0) 3px 0 / 1px 100% no-repeat; }

/* work area */
.work { flex: 1; min-height: 0; display: flex; gap: 8px; }
.treepane { width: 226px; flex: none; display: flex; flex-direction: column; border: 1px solid #828790; background: #fff; padding: 1px; }
.tree { list-style: none; flex: 1; min-height: 0; overflow: hidden; }
.tree li { display: flex; align-items: center; height: 18px; padding-left: 2px; white-space: nowrap; overflow: hidden; }
.tree li.l1 { padding-left: 14px; }
.tree li.l2 { padding-left: 26px; }
.tree b { width: 17px; padding-left: 3px; flex: none; }
.tree b svg { width: 10px; height: 10px; }
.tree li > svg { width: 16px; height: 16px; margin-right: 5px; }
.tree .bold { font-weight: 700; }
.tree .sel { background: #d9d9d9; }

.right { flex: 1; min-width: 0; display: flex; flex-direction: column; gap: 9px; }
.grid { display: grid; grid-template: 24px minmax(0, 1fr) 16px / minmax(0, 1fr) 17px; border: 1px solid #828790; background: #fff; padding: 1px; overflow: hidden; min-height: 0; }
.grid.top { height: 212px; flex: none; }
.grid table { grid-area: 1 / 1 / 3 / 3; align-self: start; }
.grid .vs { grid-area: 2 / 2; }
.grid .hs { grid-area: 3 / 1; }
.corner { background: #f0f0f0; display: grid; place-items: center; grid-area: 3 / 2; }
.hs { display: flex; align-items: center; height: 16px; background: #f0f0f0; }
.hs > svg, .vs > svg:not(.s14) { width: 10px; height: 10px; margin: 3px; }
.track { flex: 1; height: 16px; }
.thumb { height: 100%; background: #cdcdcd; }
.vs { display: flex; flex-direction: column; align-items: center; background: #f0f0f0; padding-top: 2px; z-index: 1; }
.vs > .s14 { margin-bottom: 2px; }
.vtrack { flex: 1; align-self: stretch; position: relative; }
.vthumb { position: absolute; left: 0; right: 0; background: #cdcdcd; }

table { border-collapse: separate; border-spacing: 0; table-layout: fixed; width: 100%; }
th { height: 24px; padding: 0 6px; font-weight: 400; text-align: left; border-right: 1px solid #e2e2e2; white-space: nowrap; overflow: hidden; }
td { height: 21px; padding: 0 3px; border-right: 1px solid #e2e2e2; border-bottom: 1px solid #ececec; white-space: nowrap; overflow: hidden; }
td:first-child, th:first-child { border-color: transparent; padding: 0; }
.handle { width: 18px; height: 22px; margin-left: 1px; background: #e1e1e1; border: 1px solid #adadad; display: grid; place-items: center; }
.handle svg { width: 10px; height: 14px; }
.c-h { width: 20px; } .c-nr { width: 98px; } .c-nm { width: 263px; } .c-pa { width: 73px; } .c-in { width: 38px; } .c-ku { width: 166px; }
.c-s { width: 25px; } .c-83 { width: 83px; } .c-58 { width: 58px; } .c-str { width: 110px; }

.list td { font-weight: 700; }
.list td:nth-child(3) { color: #000080; }
.list td:nth-child(2), .list td:nth-child(3), .list td:nth-child(6), .list td:nth-child(31) { border-right-color: #7a7a7a; }
.list th:nth-child(5) { padding: 0 8px; }
.list th:nth-child(n+7):nth-child(-n+30) { text-align: center; padding: 0; font-weight: 700; }
.list td:nth-child(n+7):nth-child(-n+31), .list th:nth-child(31) { text-align: center; padding: 0; }
.list td:nth-child(12) { border-left: 2px solid #e2e2e2; }
.list .g { background: #32cd32; }
.yel td:nth-child(n+2):nth-child(-n+6), .yel td:nth-child(31) { background: #ffff80; }
.cya td:nth-child(n+2):nth-child(-n+6), .cya td:nth-child(31) { background: #0ff; }
.list td:nth-child(n+32) { background: #80ff80; }
.list .cur td { background: #c0dcf3; }
.list .cur td:first-child { background: #9fcbee; }
.list .cur td:nth-child(n+3):nth-child(-n+6), .list .cur td:nth-child(31) { background: #bfdd97; }
.list .cur td:nth-child(2) { background: #9cc9a0; outline: 1px solid #0078d7; outline-offset: -1px; }
.list .cur td:nth-child(n+32) { background: #5fdb9b; }
.list .cur td.g { background: #24b467; }
.list .cur td.ve { background: #bddd38; }
.list .cur td.ub { background: #00aa40; }

/* project detail */
.lower { flex: 1; min-height: 0; display: flex; }
.project { flex: 1; min-width: 0; display: flex; gap: 2px; border: 1px solid #a0a0a0; padding: 2px; }
.detail { flex: 1; min-width: 0; display: flex; flex-direction: column; font-family: "Liberation Sans", Arial, sans-serif; }
.phase { display: flex; align-items: center; gap: 2px; padding: 8px 0 1px 8px; height: 33px; }
.grp { display: flex; height: 24px; border: 1px solid #6a6a6a; background: #fff; flex: none; }
.grp.wide { margin-left: 3px; }
.grp span { width: 26px; border-right: 1px solid #6a6a6a; display: grid; place-items: center; font-weight: 700; }
.grp.four span { width: 25px; }
.grp span:last-child { border-right: 0; width: 25px; }
.grp .on { background: #32cd32; box-shadow: inset 0 0 0 1px #fff; }
.grp .u { background: #00c800; }
.grp .y { background: #ff0; box-shadow: inset 0 0 0 1px #fff; }
.phase h2 { margin-left: 4px; white-space: nowrap; }
.tabs { display: flex; align-items: flex-end; height: 23px; padding-left: 1px; }
.tabstrip { flex: 1; min-width: 0; overflow: hidden; display: flex; align-items: flex-end; }
.tabstrip button { flex: none; height: 21px; padding: 0 3px 2px; border: 1px solid #d9d9d9; border-left: 0; white-space: nowrap; }
.tabstrip button:first-child { padding-left: 4px; }
.tabstrip button.act { height: 23px; background: #fff; border-bottom-color: #fff; padding-bottom: 4px; }
.tabstrip .pad { padding-right: 10px; }
.tabstrip .more { padding-right: 15px; }
.tabstrip .ic { display: flex; align-items: center; gap: 4px; }
.sp { width: 17px; height: 18px; margin-bottom: 3px; border: 1px solid #adadad; display: grid; place-items: center; flex: none; }
.sp svg { width: 5px; height: 8px; }
.page { flex: 1; min-height: 0; display: flex; flex-direction: column; background: #fff; border: 1px solid #d9d9d9; border-top: 0; padding: 10px 12px 7px 16px; }
.three { flex: 1; min-height: 0; display: grid; grid-template-columns: repeat(3, minmax(0, 1fr)); gap: 15px; }
.three section { display: flex; flex-direction: column; min-height: 0; }
.three h3 { color: #707070; font-size: 12px; height: 25px; flex: none; }
.three .grid { flex: 1; }
.d-n { width: 137px; } .d-b { width: 50px; } .d-s { width: 24px; } .d-d { width: 65px; } .d-e { width: 67px; } .d-i { width: 53px; }
.dates th:nth-child(4), .dates th:nth-child(6) { padding: 0; text-align: center; }
.dates th.cut { padding: 0 0 0 18px; border-right: 0; }
.dates td:nth-child(2) { color: #f00; font-weight: 700; border-right-color: #7a7a7a; }
.dates td:nth-child(2) a { color: inherit; font-weight: 400; }
.dates td:nth-child(n+4):nth-child(-n+7) { color: #f00; font-weight: 700; }
.dates td:nth-child(4), .dates td:nth-child(6) { padding: 0; text-align: center; }
.dates td:nth-child(8) { text-align: right; }
.dates .blk td:nth-child(n+2):nth-child(-n+7), .dates td.k:nth-child(n+4):nth-child(-n+7) { color: #000; }
.dates .g { background: #80ff80; }
.dates .y { background: #ffff80; }
.dates .lav { background: #e6e6fa; }
.first td { background: #e6e6e6; }
.first td:first-child { background: #d9d9d9; }
.dates .first td:nth-child(2) { background: #f8f8f8; outline: 1px solid #8c8c8c; outline-offset: -1px; }
.dates .first td.g { background: #88e488; }
.dates .first td.y { background: #e6e686; }
.dates .first td.lav:nth-child(2) { background: #e9e9f5; }
.opts { display: flex; align-items: center; gap: 10px; height: 30px; padding: 8px 0 0 15px; }
.opts label { display: flex; align-items: center; gap: 3px; }
.opts .sort { gap: 10px; }
.opts input { appearance: none; width: 13px; height: 13px; border: 1px solid #333; background: #fff; }
.combo { display: grid; grid-template-columns: 1fr 20px; align-items: center; width: 134px; height: 22px; background: #e1e1e1; border: 1px solid #adadad; }
.combo select { grid-area: 1 / 1 / 2 / 3; appearance: none; padding-left: 4px; height: 20px; }
.combo svg { grid-area: 1 / 2; width: 10px; height: 10px; }

.actions { width: 146px; flex: none; border-left: 1px solid #a0a0a0; border-top: 1px solid #a0a0a0; font-family: "Liberation Sans", Arial, sans-serif; padding-left: 2px; }
.actions button { display: grid; grid-template-columns: 125px 1fr; align-items: center; width: 100%; height: 22px; white-space: nowrap; }
.actions svg { width: 8px; height: 5px; justify-self: center; }
.actions hr, .side hr { border: 0; border-top: 1px solid #808080; margin: 1px 0 6px; }
.side { width: 31px; flex: none; padding: 4px 3px; }
.side button { display: block; height: 24px; margin-bottom: 5px; }
.side hr { margin: 6px 0 8px; border-color: #a0a0a0; }

/* view switcher and status line */
.views { display: flex; height: 26px; padding: 2px; background: #fff; border-bottom: 1px solid #d9d9d9; flex: none; }
.views button { width: 120px; display: flex; align-items: center; gap: 4px; padding-left: 4px; }
.views .act { background: #cce8ff; border: 1px solid #99d1ff; padding-left: 3px; }
.views svg { width: 16px; height: 16px; }
.status { display: flex; height: 23px; padding: 2px 0; border-top: 1px solid #e4e4e4; flex: none; }
.status span { border-right: 1px solid #d0d0d0; text-align: center; line-height: 19px; }
.w20 { width: 20px; } .w50 { width: 50px; } .w30 { width: 30px; }
.status .client { width: 250px; text-align: left; padding-left: 4px; }

/* taskbar */
.taskbar { display: flex; height: 40px; background: #000; color: #fff; flex: none; }
.taskbar > button { width: 49px; display: grid; place-items: center; }
.taskbar > button svg { width: 24px; height: 24px; }
.taskbar > .start svg { width: 16px; height: 16px; }
.taskbar > .run { box-shadow: inset 0 -2px #76b9ed; }
.taskbar > .on { background: #333; }
.find { width: 343px; display: flex; align-items: center; gap: 10px; padding-left: 11px; background: #f2f2f2; border: 1px solid #bbb; color: #444; font-size: 14px; }
.find svg { width: 16px; height: 16px; }
.find input { flex: 1; min-width: 0; height: 30px; outline: 0; }
.find input::placeholder { color: #444; opacity: 1; }
.tray { margin-left: auto; display: flex; align-items: center; gap: 8px; padding-right: 3px; }
.tray > svg { width: 16px; height: 16px; }
.clock { display: flex; flex-direction: column; text-align: center; width: 62px; line-height: 18px; }
.msg { display: grid; width: 44px; height: 40px; border-right: 1px solid #555; padding: 12px 0 0 8px; }
.msg svg { width: 16px; height: 16px; grid-area: 1 / 1; }
.msg b { grid-area: 1 / 1; width: 17px; height: 17px; border-radius: 50%; background: #333; border: 1px solid #999; line-height: 15px; text-align: center; margin: 7px 0 0 8px; }
```
